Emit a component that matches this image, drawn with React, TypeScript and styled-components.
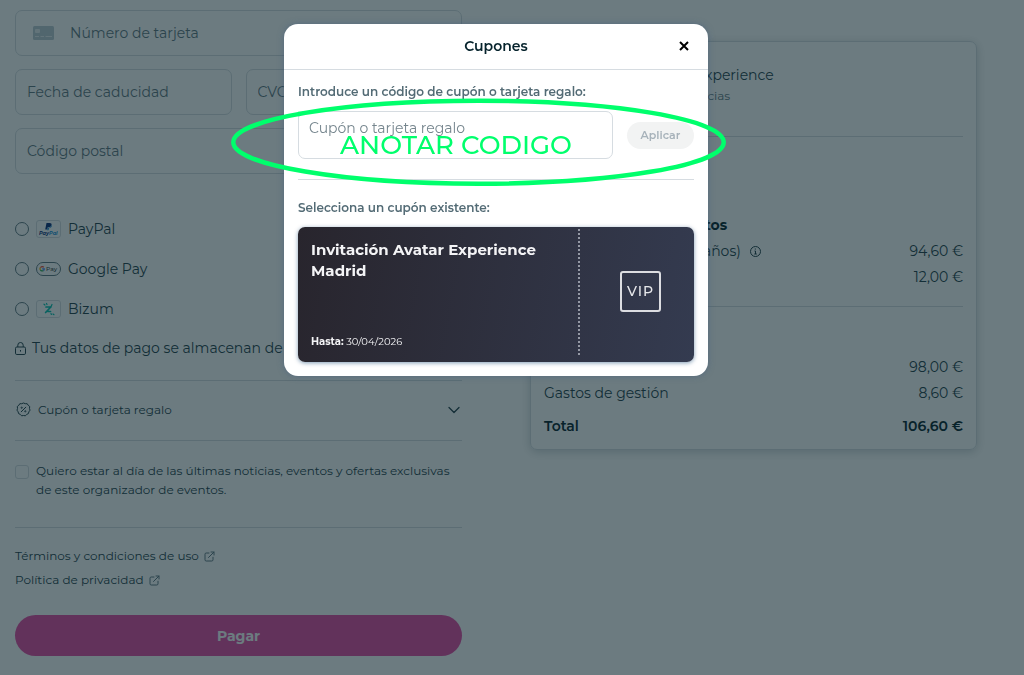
import React from "react";
import styled, { createGlobalStyle } from "styled-components";

const ink = "#06232c";
const soft = "#244049";
const muted = "#5f7680";
const caption = "#536b75";
const line = "#d6dce1";

const GlobalStyle = createGlobalStyle`
  *, *::before, *::after { box-sizing: border-box; }
  body {
    margin: 0;
    background: #fff;
    color: ${soft};
    font-family: Montserrat, Inter, "Open Sans", sans-serif;
    font-size: 14px;
  }
  button, input { font: inherit; color: inherit; }
  h1, h2, h3, p, dl, dd, dt, fieldset { margin: 0; padding: 0; border: 0; }
`;

/* ---------- Checkout page ---------- */

const Page = styled.main`
  display: grid;
  grid-template-columns: 1fr 1fr;
  align-items: start;
  column-gap: 68px;
  padding: 10px 47px 19px 15px;
`;

const Form = styled.form`
  display: flex;
  flex-direction: column;
  min-width: 0;
`;

const Fields = styled.div`
  display: grid;
  grid-template-columns: 1fr 1fr;
  gap: 13px 14px;
`;

const Field = styled.label<{ $wide?: boolean }>`
  display: flex;
  align-items: center;
  gap: 16px;
  height: 46px;
  padding: 0 11px;
  min-width: 0;
  border: 1px solid ${line};
  border-radius: 7px;
  grid-column: ${(p) => (p.$wide ? "1 / -1" : "auto")};
`;

const FieldInput = styled.input`
  flex: 1;
  min-width: 0;
  padding: 0;
  border: 0;
  outline: 0;
  background: none;
  font-size: 14px;
  &::placeholder { color: ${muted}; opacity: 1; }
`;

const CardGlyph = styled.svg`
  margin-left: 6px;
  flex: none;
`;

const Methods = styled.fieldset`
  margin-top: 35px;
`;

const Method = styled.label`
  display: flex;
  align-items: center;
  gap: 7px;
  height: 40px;
`;

const Radio = styled.input`
  appearance: none;
  flex: none;
  width: 14px;
  height: 14px;
  margin: 0;
  border: 1px solid ${muted};
  border-radius: 50%;
`;

const Badge = styled.span<{ $pill?: boolean }>`
  display: flex;
  align-items: center;
  justify-content: center;
  width: 25px;
  height: ${(p) => (p.$pill ? "14px" : "18px")};
  border: 1px solid ${(p) => (p.$pill ? muted : line)};
  border-radius: ${(p) => (p.$pill ? "7px" : "3px")};
`;

const Secure = styled.p`
  display: flex;
  align-items: center;
  gap: 6px;
  height: 38px;
  margin-bottom: 13px;
  white-space: nowrap;
`;

const CouponToggle = styled.button`
  display: flex;
  align-items: center;
  gap: 7px;
  height: 61px;
  padding: 0 2px 2px 1px;
  border: 0;
  border-top: 1px solid ${line};
  border-bottom: 1px solid ${line};
  background: none;
  font-size: 12px;
  text-align: left;
  span { flex: 1; }
`;

const Consent = styled.label`
  display: flex;
  gap: 7px;
  padding: 20px 0 28px;
  border-bottom: 1px solid ${line};
  font-size: 12px;
  line-height: 19px;
`;

const Tick = styled.input`
  appearance: none;
  flex: none;
  width: 14px;
  height: 14px;
  margin: 4px 0 0;
  border: 1px solid ${line};
  border-radius: 3px;
`;

const Legal = styled.nav`
  display: flex;
  flex-direction: column;
  align-items: flex-start;
  margin: 16px 0 23px;
`;

const LegalLink = styled.a`
  display: flex;
  align-items: center;
  gap: 5px;
  color: inherit;
  font-size: 12px;
  line-height: 24px;
  text-decoration: none;
`;

const Pay = styled.button`
  height: 41px;
  border: 0;
  border-radius: 21px;
  background: #e64aa4;
  color: #fff;
  font-size: 14px;
  font-weight: 700;
`;

/* ---------- Order summary ---------- */

const Summary = styled.aside`
  margin-top: 31px;
  padding: 14px 13px 10px;
  border: 1px solid ${line};
  border-radius: 7px;
  box-shadow: 0 2px 10px rgba(6, 35, 44, 0.2);
`;

const EventHead = styled.header`
  display: flex;
  gap: 16px;
  height: 81px;
  border-bottom: 1px solid ${line};
`;

const Poster = styled.div`
  width: 55px;
  height: 55px;
  border-radius: 7px;
  background: ${line};
`;

const EventText = styled.div`
  padding-top: 8px;
`;

const EventName = styled.h2`
  font-size: 14px;
  font-weight: 400;
  line-height: 22px;
`;

const Venue = styled.p`
  color: ${muted};
  font-size: 12px;
  line-height: 20px;
`;

const When = styled.p`
  padding: 24px 0 25px;
  line-height: 26px;
`;

const Heading = styled.h3`
  color: ${ink};
  font-size: 14px;
  font-weight: 700;
  line-height: 26px;
`;

const Lines = styled.dl<{ $ruled?: boolean }>`
  padding-bottom: ${(p) => (p.$ruled ? "16px" : "7px")};
  border-bottom: ${(p) => (p.$ruled ? `1px solid ${line}` : "0")};
`;

const Charge = styled.div<{ $total?: boolean }>`
  display: flex;
  justify-content: space-between;
  color: ${(p) => (p.$total ? ink : soft)};
  font-weight: ${(p) => (p.$total ? 600 : 400)};
  line-height: 26px;
  dt { display: flex; align-items: center; gap: 9px; }
`;

const Promo = styled.p`
  padding: 11px 0 10px;
  line-height: 26px;
`;

/* ---------- Coupon dialog ---------- */

const Backdrop = styled.div`
  position: fixed;
  inset: 0;
  display: flex;
  align-items: flex-start;
  justify-content: center;
  padding: 24px 32px 24px 0;
  background: rgba(10, 35, 43, 0.6);
`;

const Dialog = styled.section`
  position: relative;
  width: 100%;
  max-width: 424px;
  border-radius: 14px;
  background: #fff;
  box-shadow: 0 0 6px rgba(60, 90, 125, 0.5);
`;

const DialogBar = styled.header`
  display: grid;
  grid-template-columns: 20px 1fr 20px;
  align-items: center;
  height: 46px;
  padding: 0 14px 2px;
  border-bottom: 1px solid ${line};
`;

const DialogTitle = styled.h1`
  grid-column: 2;
  color: ${ink};
  font-size: 14px;
  font-weight: 600;
  text-align: center;
`;

const Close = styled.button`
  display: flex;
  align-items: center;
  justify-content: center;
  width: 20px;
  height: 20px;
  padding: 0;
  border: 0;
  background: none;
`;

const DialogBody = styled.div`
  padding: 14px;
`;

const Caption = styled.label`
  display: block;
  color: ${caption};
  font-size: 12px;
  font-weight: 600;
  line-height: 16px;
`;

const CodeRow = styled.div`
  display: flex;
  align-items: center;
  gap: 14px;
  padding: 11px 0 20px;
  margin-bottom: 20px;
  border-bottom: 1px solid ${line};
`;

const CodeInput = styled.input`
  flex: 1;
  min-width: 0;
  height: 48px;
  padding: 0 10px 15px;
  border: 1px solid ${line};
  border-radius: 7px;
  background: #fff;
  font-size: 14px;
  &::placeholder { color: #75858d; opacity: 1; }
`;

const Apply = styled.button`
  width: 67px;
  height: 27px;
  padding: 0;
  border: 0;
  border-radius: 14px;
  background: #f2f3f3;
  color: #a7b2ba;
  font-size: 11px;
  font-weight: 600;
`;

const Coupon = styled.article`
  display: flex;
  height: 135px;
  margin-top: 11px;
  border-radius: 7px;
  background: linear-gradient(100deg, #28252d, #343b50);
  box-shadow: 0 1px 4px rgba(6, 60, 110, 0.5);
  color: #f4f4f6;
`;

const CouponInfo = styled.div`
  display: flex;
  flex: 1;
  flex-direction: column;
  justify-content: space-between;
  padding: 12px 13px;
`;

const CouponName = styled.h2`
  font-size: 15px;
  font-weight: 700;
  line-height: 21px;
`;

const Expiry = styled.p`
  font-size: 10px;
  line-height: 16px;
`;

const Stub = styled.div`
  display: flex;
  align-items: center;
  justify-content: center;
  width: 116px;
  background: repeating-linear-gradient(#9599a5 0 2px, transparent 2px 4px) 0 2px / 2px 128px no-repeat;
`;

const Vip = styled.span`
  display: flex;
  align-items: center;
  justify-content: center;
  width: 41px;
  height: 41px;
  margin: 0 0 7px 9px;
  border: 2px solid #dcdde1;
  border-radius: 3px;
  color: #e6e7ea;
  font-size: 14px;
  font-weight: 500;
  letter-spacing: 1px;
`;

/* ---------- Annotation over the dialog ---------- */

const Ring = styled.svg`
  position: absolute;
  top: 72px;
  left: -56px;
  pointer-events: none;
`;

const Note = styled.p`
  position: absolute;
  top: 111px;
  left: 56px;
  color: #00ff6c;
  font-size: 26px;
  font-weight: 500;
  line-height: 20px;
  white-space: nowrap;
  pointer-events: none;
`;

const External = () => (
  <svg width="11" height="11" viewBox="0 0 11 11" fill="none" stroke={muted} strokeLinecap="round" strokeLinejoin="round">
    <path d="M5 2H2.200Q1 2 1 3.200V8.800Q1 10 2.200 10H7.800Q9 10 9 8.800V6.200" />
    <path d="M4.500 6.500L10 1M7 1H10V4" />
  </svg>
);

export default function App() {
  return (
    <>
      <GlobalStyle />
      <Page>
        <Form>
          <Fields>
            <Field $wide>
              <CardGlyph width="21" height="14" viewBox="0 0 21 14">
                <rect width="21" height="14" rx="1.500" fill="#bccad3" />
                <rect x="2" y="3" width="5" height="4" rx="1" fill="#e9eef1" />
                <path d="M2 10.500H6M7.500 10.500H11M12.500 10.500H19" stroke="#e9eef1" />
              </CardGlyph>
              <FieldInput aria-label="Número de tarjeta" placeholder="Número de tarjeta" />
            </Field>
            <Field>
              <FieldInput aria-label="Fecha de caducidad" placeholder="Fecha de caducidad" />
            </Field>
            <Field>
              <FieldInput aria-label="CVC" placeholder="CVC" />
            </Field>
            <Field $wide>
              <FieldInput aria-label="Código postal" placeholder="Código postal" />
            </Field>
          </Fields>

          <Methods>
            <Method>
              <Radio type="radio" name="method" />
              <Badge>
                <svg width="19" height="14" viewBox="0 0 19 14" aria-hidden="true">
                  <path d="M7.500 1H10.500Q13 1 12.500 3.300Q12 5.300 9.600 5.300H8.700L8.300 7.500H6.200Z" fill="#0a2d78" />
                  <path d="M12.800 2.600Q13.500 6 10 6.200L9.500 8.200H8.200L8.800 5.800H9.800Q12.200 5.700 12.800 2.600Z" fill="#1a90d8" />
                  <text x="0" y="13" fontSize="5" fontWeight="700" fontStyle="italic" fill="#0a2d78">Pay<tspan fill="#1a90d8">Pal</tspan></text>
                </svg>
              </Badge>
              PayPal
            </Method>
            <Method>
              <Radio type="radio" name="method" />
              <Badge $pill>
                <svg width="19" height="10" viewBox="0 0 19 10" aria-hidden="true" fill="none" strokeWidth="1.300">
                  <path d="M4.800 3.200A2.200 2.200 0 0 0 1.400 3.600" stroke="#ea4335" />
                  <path d="M1.400 3.600A2.200 2.200 0 0 0 1.400 6" stroke="#fbbc04" />
                  <path d="M1.400 6A2.200 2.200 0 0 0 4.500 6.500" stroke="#34a853" />
                  <path d="M4.500 6.500Q5.200 5.900 5.200 4.900H3.200" stroke="#4285f4" />
                  <text x="7" y="7" fontSize="6" fontWeight="500" fill="#3c4043">Pay</text>
                </svg>
              </Badge>
              Google Pay
            </Method>
            <Method>
              <Radio type="radio" name="method" />
              <Badge>
                <svg width="13" height="14" viewBox="0 0 13 14" aria-hidden="true" fill="none" stroke="#05c1b0" strokeLinecap="round" strokeLinejoin="round">
                  <path d="M4 5H8.800L3.600 10.500M6 9.500H8.500" strokeWidth="1.700" />
                  <path d="M2 2.200L3 3M4.500 1.500L5 2.500M9 11.500L9.400 12.500M11 12L12 12.700M8.800 5L10 2.500" strokeWidth="1.200" />
                </svg>
              </Badge>
              Bizum
            </Method>
          </Methods>

          <Secure>
            <svg width="11" height="13" viewBox="0 0 11 13" fill="none" stroke={soft} strokeLinejoin="round" aria-hidden="true">
              <rect x="0.500" y="5" width="10" height="7.500" rx="1.300" />
              <path d="M2.800 5V3.200Q2.800 0.500 5.500 0.500Q8.200 0.500 8.200 3.200V5M5.500 8V9.600" />
            </svg>
            Tus datos de pago se almacenan de manera segura
          </Secure>

          <CouponToggle type="button">
            <svg width="15" height="15" viewBox="0 0 15 15" fill="none" stroke={soft} aria-hidden="true">
              <path
                d="M7.500 1L9.300 1.700L11.200 1.700L12.200 3.300L13.700 4.500L13.500 6.400L14 8.200L12.900 9.800L12.400 11.600L10.700 12.400L9.400 13.800L7.500 13.500L5.600 13.800L4.300 12.400L2.600 11.600L2.100 9.800L1 8.200L1.500 6.400L1.300 4.500L2.800 3.300L3.800 1.700L5.700 1.700Z"
                strokeLinejoin="round"
              />
              <path d="M5.200 9.800L9.800 5.200" strokeLinecap="round" />
              <circle cx="5.700" cy="5.700" r="0.600" />
              <circle cx="9.300" cy="9.300" r="0.600" />
            </svg>
            <span>Cupón o tarjeta regalo</span>
            <svg width="12" height="8" viewBox="0 0 12 8" fill="none" stroke={soft} strokeWidth="1.300" strokeLinecap="round" strokeLinejoin="round" aria-hidden="true">
              <path d="M1 1.500L6 6.500L11 1.500" />
            </svg>
          </CouponToggle>

          <Consent>
            <Tick type="checkbox" />
            <span>
              Quiero estar al día de las últimas noticias, eventos y ofertas exclusivas de este organizador de eventos.
            </span>
          </Consent>

          <Legal>
            <LegalLink href="#terminos">
              Términos y condiciones de uso <External />
            </LegalLink>
            <LegalLink href="#privacidad">
              Política de privacidad <External />
            </LegalLink>
          </Legal>

          <Pay type="button">Pagar</Pay>
        </Form>

        <Summary>
          <EventHead>
            <Poster />
            <EventText>
              <EventName>Avatar: The Experience</EventName>
              <Venue>Parque de Ciencias</Venue>
            </EventText>
          </EventHead>
          <When>Madrid</When>
          <Heading>Entradas, complementos</Heading>
          <Lines $ruled>
            <Charge>
              <dt>
                Entrada general (4 a 11 años)
                <svg width="11" height="11" viewBox="0 0 11 11" fill="none" stroke={soft} aria-hidden="true">
                  <circle cx="5.500" cy="5.500" r="5" />
                  <path d="M4.500 5H5.500V8M4.300 8H6.800M5.300 2.500V3.600" />
                </svg>
              </dt>
              <dd>94,60 €</dd>
            </Charge>
            <Charge>
              <dt>Complementos</dt>
              <dd>12,00 €</dd>
            </Charge>
          </Lines>
          <Promo>Resumen</Promo>
          <Lines>
            <Charge>
              <dt>Subtotal</dt>
              <dd>98,00 €</dd>
            </Charge>
            <Charge>
              <dt>Gastos de gestión</dt>
              <dd>8,60 €</dd>
            </Charge>
          </Lines>
          <dl>
            <Charge $total>
              <dt>Total</dt>
              <dd>106,60 €</dd>
            </Charge>
          </dl>
        </Summary>
      </Page>

      <Backdrop>
        <Dialog role="dialog" aria-modal="true" aria-labelledby="coupons-title">
          <DialogBar>
            <DialogTitle id="coupons-title">Cupones</DialogTitle>
            <Close type="button" aria-label="Cerrar">
              <svg width="10" height="10" viewBox="0 0 10 10" stroke="#000" strokeWidth="2">
                <path d="M1 1L9 9M9 1L1 9" />
              </svg>
            </Close>
          </DialogBar>
          <DialogBody>
            <Caption htmlFor="coupon-code">Introduce un código de cupón o tarjeta regalo:</Caption>
            <CodeRow>
              <CodeInput id="coupon-code" placeholder="Cupón o tarjeta regalo" />
              <Apply type="button">Aplicar</Apply>
            </CodeRow>
            <Caption as="p">Selecciona un cupón existente:</Caption>
            <Coupon>
              <CouponInfo>
                <CouponName>Invitación Avatar Experience Madrid</CouponName>
                <Expiry>
                  <b>Hasta:</b> 30/04/2026
                </Expiry>
              </CouponInfo>
              <Stub>
                <Vip>VIP</Vip>
              </Stub>
            </Coupon>
          </DialogBody>
          <Ring width="500" height="92" viewBox="0 0 500 92" fill="none" stroke="#00ff6c" strokeWidth="4.500" aria-hidden="true">
            <ellipse cx="250.500" cy="46.200" rx="245.200" ry="41.500" />
          </Ring>
          <Note>ANOTAR CODIGO</Note>
        </Dialog>
      </Backdrop>
    </>
  );
}
